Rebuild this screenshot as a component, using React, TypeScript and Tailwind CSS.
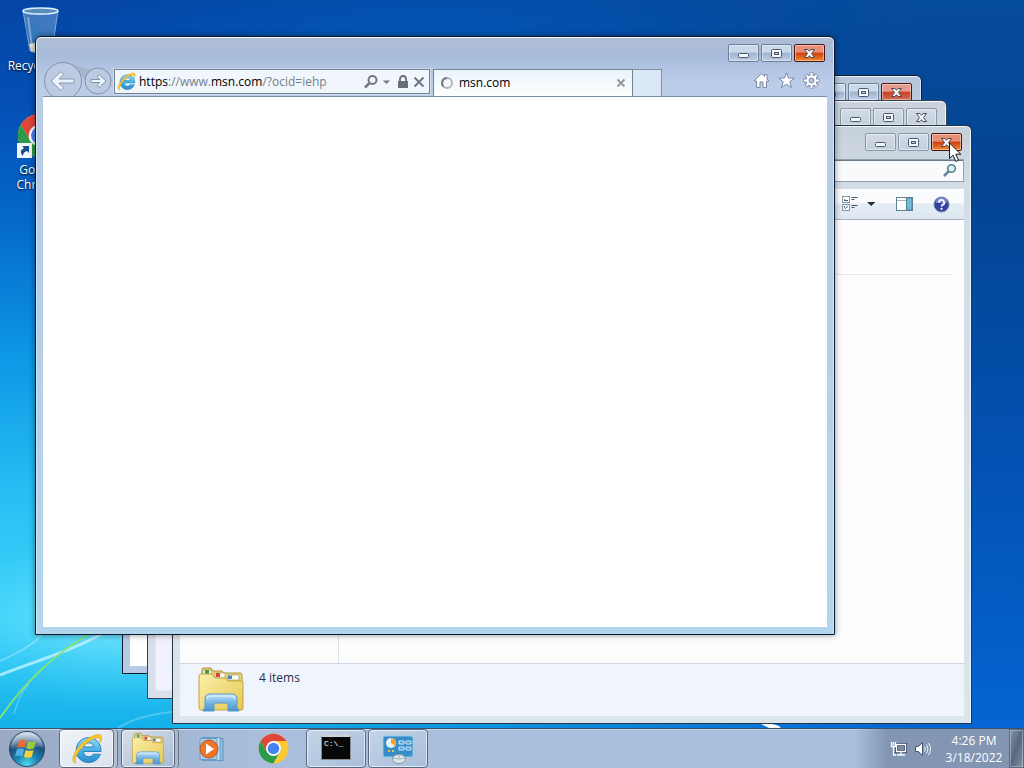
import React from "react";

function CaptionGlyph({ kind }: { kind: "min" | "max" | "close" }) {
  return (
    <svg width="15" height="13" viewBox="0 0 15 13" aria-hidden="true">
      {kind === "min" && <rect x="2.5" y="6.5" width="10" height="4" rx="1" fill="#f4f7fb" stroke="#4c586c" />}
      {kind === "max" && (
        <>
          <rect x="2.5" y="2.5" width="10" height="8" rx="1" fill="#f4f7fb" stroke="#4c586c" />
          <rect x="5.5" y="5.5" width="4" height="2" fill="#c4d2e6" stroke="#4c586c" />
        </>
      )}
      {kind === "close" && (
        <path
          d="M2.500 2.500h3.500l1.500 1.800L9 2.500h3.500L9.500 6.500l3 4H9L7.500 8.700 6 10.500H2.500l3-4z"
          fill="#f8f8fa" stroke="#4c4a58" strokeLinejoin="round"
        />
      )}
    </svg>
  );
}

function CaptionButtons({ tone }: { tone: "active" | "mixed" | "flat" | "hover" }) {
  const plain =
    tone === "active" || tone === "mixed"
      ? "border-[#6d7e99] bg-linear-to-b from-[#ccd9eb] from-45% via-[#9db3d0] via-50% to-[#bfd0e6]"
      : "border-[#8a97a8] bg-linear-to-b from-[#d3dce7] to-[#c4cfdd]";
  const close =
    tone === "flat"
      ? "border-[#8a97a8] bg-linear-to-b from-[#d3dce7] to-[#c4cfdd]"
      : tone === "mixed"
        ? "border-[#4b1414] bg-linear-to-b from-[#e69a8b] from-45% via-[#c93f28] via-50% to-[#d76c4e]"
        : "border-[#4b1414] bg-linear-to-b from-[#e88e74] from-45% via-[#cc3a12] via-50% to-[#f28a2c]";
  const base = "flex h-[18px] w-[31px] items-center justify-center rounded-xs border shadow-[inset_0_0_0_1px_rgba(255,255,255,0.45)]";
  return (
    <div className="flex gap-0.5">
      <button aria-label="Minimize" className={base + " " + plain}><CaptionGlyph kind="min" /></button>
      <button aria-label="Maximize" className={base + " " + plain}><CaptionGlyph kind="max" /></button>
      <button aria-label="Close" className={base + " " + close}><CaptionGlyph kind="close" /></button>
    </div>
  );
}

function IeLogo({ size }: { size: number }) {
  return (
    <svg width={size} height={size} viewBox="0 0 32 32" aria-hidden="true">
      <defs>
        <linearGradient id="ieBlue" x1="0" y1="0" x2="0" y2="1">
          <stop offset="0" stopColor="#8fdcf8" />
          <stop offset="0.55" stopColor="#3fb0e6" />
          <stop offset="1" stopColor="#2c8dcd" />
        </linearGradient>
      </defs>
      <path
        d="M30 18.5H12.5c.2 3.2 2.2 5.2 5.2 5.2 2 0 3.6-.9 4.6-2.4h7C27.600 26.500 23 29.500 17.500 29.500 10.500 29.500 5.200 24.300 5.200 17.200 5.200 10 10.500 4.700 17.500 4.700 25 4.700 30.300 10 30 18.500zM22.800 14c-.5-2.600-2.300-4.200-5-4.200s-4.600 1.600-5.100 4.200z"
        fill="url(#ieBlue)" stroke="#2579b5" strokeWidth="0.9"
      />
      <path d="M5 30C-2 29 3.500 17 12 9.500 20 2 29.500-.5 30.500 3.500c.6 2.300-.6 4.500-1.500 6 .3-2.600.1-4.400-2.200-4.600-3.400-.3-9 2.700-14.200 8C7.500 18 4.500 23.500 4.300 27c0 1.400.2 2.300.7 3z" fill="#f7c52d" stroke="#d99a1c" strokeWidth="0.5" />
    </svg>
  );
}

function ChromeLogo({ size }: { size: number }) {
  return (
    <svg width={size} height={size} viewBox="0 0 48 48" aria-hidden="true">
      <circle cx="24" cy="24" r="23" fill="#fbc934" />
      <path d="M4.100 12.500A23 23 0 0 1 43.900 12.500H24L14 29.500z" fill="#e0463a" />
      <path d="M4.100 12.500L14 29.700 24 35 33.900 29.700 24 47A23 23 0 0 1 4.100 12.500z" fill="#2b9c4c" />
      <path d="M43.900 12.500H24L34 29.700 24 47A23 23 0 0 0 43.900 12.500z" fill="#fbc934" />
      <circle cx="24" cy="24" r="11.500" fill="#fff" />
      <circle cx="24" cy="24" r="9" fill="#4584ef" />
    </svg>
  );
}

function FolderIcon({ size }: { size: number }) {
  return (
    <svg width={size} height={size} viewBox="0 0 48 48" aria-hidden="true">
      <defs>
        <linearGradient id="folderBody" x1="0" y1="0" x2="1" y2="1">
          <stop offset="0" stopColor="#fbf1ac" />
          <stop offset="1" stopColor="#e6c751" />
        </linearGradient>
        <linearGradient id="folderBase" x1="0" y1="0" x2="0" y2="1">
          <stop offset="0" stopColor="#c8e5f8" />
          <stop offset="0.5" stopColor="#76b6e6" />
          <stop offset="1" stopColor="#4992cc" />
        </linearGradient>
      </defs>
      <path d="M5 3q0-1 1-1h8l2 3h9l2 2h16q2 0 2 2v33H5z" fill="#e9d272" stroke="#b3943c" />
      <path d="M6 4h8v6H6zM18 7h10v5H18zM31 9h11v5H31z" fill="#fffef3" stroke="#a69b6a" strokeWidth=".7" />
      <path d="M8 4h4v4H8z" fill="#3da24c" />
      <path d="M19 7h4v4h-4z" fill="#d6463b" />
      <path d="M31 9.500h4v3.500h-4z" fill="#4a84c2" />
      <path d="M2 10q0-2 2-2h11l3 4h11l2 3h14q1 0 1 2v25q0 2-2 2H4q-2 0-2-2z" fill="url(#folderBody)" stroke="#c3a33f" />
      <path d="M8 33q0-5 5-5h22q5 0 5 5v9q2 1 2 3H31v-7q0-1-1-1H18q-1 0-1 1v7H6q0-2 2-3z" fill="url(#folderBase)" stroke="#5b9acb" />
      <path d="M10 33q0-3 3-3h22q3 0 3 3" fill="none" stroke="#e6f5fd" />
    </svg>
  );
}

function StartOrb() {
  return (
    <svg width="38" height="38" viewBox="0 0 38 38" aria-hidden="true">
      <defs>
        <radialGradient id="orb" cx="0.5" cy="0.95" r="0.9">
          <stop offset="0" stopColor="#55dcf2" />
          <stop offset="0.35" stopColor="#1c86b3" />
          <stop offset="0.7" stopColor="#1c4d7c" />
          <stop offset="1" stopColor="#8da9c4" />
        </radialGradient>
        <linearGradient id="orbGloss" x1="0" y1="0" x2="0" y2="1">
          <stop offset="0" stopColor="#fff" stopOpacity="0.65" />
          <stop offset="1" stopColor="#fff" stopOpacity="0.08" />
        </linearGradient>
      </defs>
      <circle cx="19" cy="19" r="17.500" fill="url(#orb)" stroke="#2b4869" />
      <path d="M3 18a16 16 0 0 1 32 0C28 14 12 22 3 18z" fill="url(#orbGloss)" />
      <path d="M11 11c3-2 5-1.500 7.500-.4L16.700 17.600c-2.400-1-4.500-1.200-7.400.3z" fill="#ee6a35" />
      <path d="M20 11.300c2.600 1.100 4.700 1.300 8-.3l-1.900 7.200c-2.900 1.400-5 1.200-7.900.1z" fill="#9cc93c" />
      <path d="M8.800 19.500c2.900-1.500 5-1.200 7.400-.2l-1.900 7c-2.300-1.100-4.500-1.100-7.300.3z" fill="#53aee6" />
      <path d="M17.700 20c2.700 1.100 5 1.200 7.900-.1l-1.900 7c-2.800 1.300-5.200 1.100-7.800-.1z" fill="#fbd13a" />
    </svg>
  );
}

function Wallpaper() {
  return (
    <svg className="absolute inset-0 h-full w-full" viewBox="0 0 1024 728" preserveAspectRatio="none" aria-hidden="true">
      <defs>
        <linearGradient id="sky" x1="0" y1="0" x2="0" y2="1">
          <stop offset="0" stopColor="#0546a4" />
          <stop offset="0.15" stopColor="#0450b6" />
          <stop offset="0.3" stopColor="#0468cb" />
          <stop offset="0.5" stopColor="#0d9ae6" />
          <stop offset="0.7" stopColor="#2cc2f5" />
          <stop offset="0.85" stopColor="#3cd2f8" />
          <stop offset="1" stopColor="#14b0ea" />
        </linearGradient>
        <linearGradient id="skyRight" x1="0" y1="0" x2="0" y2="1">
          <stop offset="0" stopColor="#064c9c" />
          <stop offset="0.25" stopColor="#034491" />
          <stop offset="0.65" stopColor="#0352b4" />
          <stop offset="1" stopColor="#0565d2" />
        </linearGradient>
        <linearGradient id="fade" x1="0" y1="0" x2="1" y2="0">
          <stop offset="0.2" stopColor="#000" />
          <stop offset="0.9" stopColor="#fff" />
        </linearGradient>
        <mask id="fadeMask"><rect width="1024" height="728" fill="url(#fade)" /></mask>
        <radialGradient id="glow">
          <stop offset="0" stopColor="#a5f4ff" stopOpacity="0.6" />
          <stop offset="1" stopColor="#50dcff" stopOpacity="0" />
        </radialGradient>
        <radialGradient id="topGlow">
          <stop offset="0" stopColor="#0257b8" stopOpacity="0.8" />
          <stop offset="1" stopColor="#0257b8" stopOpacity="0" />
        </radialGradient>
      </defs>
      <rect width="1024" height="728" fill="url(#sky)" />
      <rect width="1024" height="728" fill="url(#skyRight)" mask="url(#fadeMask)" />
      <ellipse cx="420" cy="40" rx="380" ry="90" fill="url(#topGlow)" />
      <ellipse cx="120" cy="620" rx="190" ry="90" fill="url(#glow)" />
      <path d="M0 675C35 661 70 652 105 632" stroke="#c8f6ff" strokeWidth="3" fill="none" opacity=".75" />
      <path d="M0 661C25 650 38 640 43 633" stroke="#c8f6ff" strokeWidth="2" fill="none" opacity=".4" />
      <path d="M0 718C25 682 53 655 92 632" stroke="#82e573" strokeWidth="2" fill="none" />
      <path d="M14 714C20 693 24 690 29 684" stroke="#b9f1fb" strokeWidth="1.500" fill="none" opacity=".35" />
      <path d="M118 728C133 718 152 714 172 712" stroke="#b9f1fb" strokeWidth="2" fill="none" opacity=".3" />
      <path d="M761 724q16-1 20 4h-12z" fill="#fff" />
    </svg>
  );
}

const frame = "absolute flex flex-col rounded-t-md border";

function BrowserWindow() {
  return (
    <section
      aria-label="msn.com"
      className={frame + " left-[35px] top-9 h-[599px] w-[800px] overflow-hidden border-[#0b1a2c] bg-[linear-gradient(180deg,#b0bdd4_0px,#a8bcdb_20px,#bccdea_46px,#b9cbe6_90px,#b6cce8_130px,#b2d5ee_600px)] px-[7px] pb-[7px] shadow-[inset_0_1px_0_#f4f8fc,inset_1px_0_0_#d5e6f5,inset_-1px_0_0_#c9ecfb,0_0_6px_rgba(0,0,0,0.45)]"}
    >
      <div className="flex h-[26px] shrink-0 justify-end pr-0.5 pt-[7px]">
        <CaptionButtons tone="active" />
      </div>
      <div className="flex h-[34px] shrink-0 items-end border-b border-[#788ca6]">
        <div className="flex h-9 w-[71px] shrink-0 items-start overflow-hidden">
          <svg width="71" height="36" viewBox="0 0 71 36" aria-hidden="true" className="shrink-0">
            <path d="M30 4Q42 10 53 9L42 20z" fill="#a5b5ce" />
            <circle cx="20" cy="21" r="18.500" fill="#bccbe1" stroke="#8392ac" />
            <circle cx="55" cy="21" r="13" fill="#bccbe1" stroke="#8392ac" />
            <path d="M8 21l10-9.500 2.500 2.800-4.600 4.700H31v4H15.900l4.600 4.700L18 30.500z" fill="#edf3fb" stroke="#8595b0" strokeLinejoin="round" />
            <path d="M63 21l-7-6.500-2 2.300 3 2.700H48v3h9l-3 2.700 2 2.300z" fill="#edf3fb" stroke="#8595b0" strokeLinejoin="round" />
          </svg>
        </div>
        <form className="relative mb-0.5 flex h-[25px] w-[316px] min-w-0 items-center gap-1 border border-[#70858f] bg-[#f0f6fb] px-0.5 outline outline-white/30" onSubmit={(e) => e.preventDefault()}>
          <IeLogo size={19} />
          <input aria-label="Address" defaultValue="https://www.msn.com/?ocid=iehp" className="h-5 w-[219px] shrink-0 bg-transparent text-xs text-transparent caret-black outline-none" />
          <div aria-hidden="true" className="pointer-events-none absolute left-6 text-xs text-[#76808b]">
            <span className="text-black">https</span>://www.<span className="text-black">msn.com</span>/?ocid=iehp
          </div>
          <button aria-label="Search" className="flex">
            <svg width="16" height="16" viewBox="0 0 16 16" fill="none" stroke="#717783" strokeWidth="2"><circle cx="9.500" cy="6" r="4" /><path d="M6.500 9L2 13.500" strokeWidth="2.500" /></svg>
          </button>
          <button aria-label="Show address list" className="flex">
            <svg width="8" height="8" viewBox="0 0 8 8"><path d="M0 2.500h7L3.500 6z" fill="#717783" /></svg>
          </button>
          <button aria-label="Security report" className="ml-0.5 flex">
            <svg width="12" height="14" viewBox="0 0 12 14"><path d="M3 6V4a3 3 0 0 1 6 0v2" fill="none" stroke="#686e7a" strokeWidth="1.800" /><rect x="1" y="6" width="10" height="7" fill="#686e7a" /></svg>
          </button>
          <button aria-label="Stop" className="flex">
            <svg width="12" height="12" viewBox="0 0 12 12"><path d="M1.500 1.500l9 9M10.500 1.500l-9 9" stroke="#717783" strokeWidth="2" /></svg>
          </button>
        </form>
        <div className="ml-[3px] flex h-[27px] w-[200px] shrink-0 items-center border border-b-0 border-[#71868f] bg-linear-to-b from-[#eaf4fb] to-[#fdfefe] px-1.5">
          <svg width="14" height="14" viewBox="0 0 14 14" className="shrink-0" aria-hidden="true"><circle cx="7" cy="7" r="5" fill="none" stroke="#b1b3b7" strokeWidth="2" /><path d="M3.500 10.500A5 5 0 0 1 7 2" fill="none" stroke="#7c8086" strokeWidth="2" /></svg>
          <span className="ml-[5px] flex-1 text-xs text-black">msn.com</span>
          <button aria-label="Close tab" className="flex"><svg width="10" height="10" viewBox="0 0 10 10"><path d="M1.500 1.500l7 7M8.500 1.500l-7 7" stroke="#92989f" strokeWidth="2" /></svg></button>
        </div>
        <button aria-label="New tab" className="h-[27px] w-[29px] shrink-0 border border-b-0 border-l-0 border-[#7e929f] bg-[#dae7f6]" />
        <div className="mb-[7px] ml-auto flex items-center gap-2 pr-[7px]">
          <button aria-label="Home" className="flex"><svg width="17" height="17" viewBox="0 0 17 17"><path d="M8.500 1.500L1 9h2.500v6.500h3.500V10h3v5.500h3.500V9H16l-2-2V2.500h-2.500v2z" fill="#fff" stroke="#7888a5" /></svg></button>
          <button aria-label="Favorites" className="flex"><svg width="17" height="17" viewBox="0 0 17 17"><path d="M8.500.8l2 5.300h5.800l-4.500 3.700 1.700 5.800-5-3.400-5 3.400 1.700-5.800L.7 6.100h5.800z" fill="#fff" stroke="#7888a5" /></svg></button>
          <button aria-label="Tools" className="flex">
            <svg width="17" height="17" viewBox="0 0 17 17" fill="none">
              <g stroke="#7888a5" strokeWidth="4"><path d="M8.500.5v16M.5 8.500h16M2.900 2.900l11.200 11.200M14.100 2.900L2.900 14.100" /></g>
              <circle cx="8.500" cy="8.500" r="5.800" fill="#7888a5" />
              <g stroke="#fff" strokeWidth="2"><path d="M8.500 1v15M1 8.500h15M3.300 3.300l10.400 10.400M13.700 3.300L3.300 13.700" /></g>
              <circle cx="8.500" cy="8.500" r="5" fill="#fff" /><circle cx="8.500" cy="8.500" r="2.500" fill="#b7c6df" stroke="#7888a5" />
            </svg>
          </button>
        </div>
      </div>
      <main className="flex-1 bg-white" />
    </section>
  );
}

function ExplorerWindow() {
  return (
    <section aria-label="Explorer" className={frame + " left-[172px] top-[125px] h-[599px] w-[800px] border-[#243442] bg-linear-to-b from-[#c6d0db] from-0% via-[#d3dce7] via-10% to-[#dbe5ec] px-[7px] pb-[7px] shadow-[inset_0_1px_0_#f4f8fc,inset_-1px_0_0_#eef5fb]"}>
      <div className="flex h-[33px] shrink-0 justify-end pr-0.5 pt-[7px]"><CaptionButtons tone="hover" /></div>
      <div className="flex h-[30px] shrink-0 justify-end">
        <label className="flex h-[23px] w-[220px] items-center border border-[#8fa0af] bg-[#f8fafc] pr-1.5 shadow-[inset_0_1px_0_#697b89]">
          <input type="search" aria-label="Search files" className="min-w-0 flex-1 bg-transparent outline-none" />
          <svg width="15" height="15" viewBox="0 0 15 15" fill="none" aria-hidden="true"><path d="M7 8L2 13" stroke="#668494" strokeWidth="2.500" /><circle cx="9.500" cy="5.500" r="3.800" fill="#e5f2f6" stroke="#4f8490" strokeWidth="1.600" /></svg>
        </label>
      </div>
      <div className="flex h-[31px] shrink-0 items-center justify-end border-b border-[#a5b5c7] bg-linear-to-b from-[#f9fbfd] from-45% via-[#e5ecf5] via-50% to-[#dde6f0] pr-3.5 shadow-[inset_0_1px_0_#fff]">
        <button aria-label="Change view" className="flex">
          <svg width="18" height="18" viewBox="0 0 18 18" fill="none"><rect x="1.500" y="1.500" width="7" height="6" fill="#fff" stroke="#8896a4" /><rect x="1.500" y="9.500" width="7" height="6" fill="#fff" stroke="#8896a4" /><path d="M3 6V4l2 1h2v1z" fill="#48637b" /><path d="M3.500 11v1l1 2M6.500 11l-1 2" stroke="#48637b" /><path d="M10.500 2.500h6M10.500 4.500h3M10.500 10.500h6M10.500 12.500h3" stroke="#46535f" /></svg>
        </button>
        <button aria-label="More views" className="ml-2 flex"><svg width="9" height="8" viewBox="0 0 9 8"><path d="M0 2h8.500L4.200 6z" fill="#26323e" /></svg></button>
        <button aria-label="Preview pane" className="ml-5 flex"><svg width="17" height="16" viewBox="0 0 17 16"><rect x=".5" y="1.500" width="16" height="13" fill="#fff" stroke="#658190" /><path d="M1 4.500h10" stroke="#a5b7c2" /><rect x="10.500" y="2" width="5.500" height="12" fill="#79b8d5" stroke="#4e859e" /></svg></button>
        <button aria-label="Help" className="ml-5 flex"><svg width="17" height="17" viewBox="0 0 17 17"><circle cx="8.500" cy="8.500" r="7.500" fill="#3240a0" stroke="#7b86aa" /><path d="M2.500 7a6 6 0 0 1 12 0z" fill="#7484d2" /><path d="M6 6.500a2.600 2.600 0 1 1 3.500 2.400Q8.500 9.300 8.500 10.500" fill="none" stroke="#fff" strokeWidth="1.800" /><circle cx="8.500" cy="12.800" r="1.100" fill="#fff" /></svg></button>
      </div>
      <div className="flex min-h-0 flex-1 bg-[#fdfdfe]">
        <aside className="w-[159px] border-r border-[#dce2ea]" />
        <div className="flex-1"><div className="mr-3 h-[55px] border-b border-[#e3e8ee]" /></div>
      </div>
      <footer className="flex h-[53px] shrink-0 items-start border-t border-[#cdd6e3] bg-[#f0f4fd] pl-[17px] pt-0.5 text-xs text-[#273049]">
        <FolderIcon size={48} />
        <span className="ml-3.5 mt-1">4 items</span>
      </footer>
    </section>
  );
}

const task = "flex h-full shrink-0 items-center justify-center rounded-sm border border-[#58677d] shadow-[inset_0_0_0_1px_rgba(255,255,255,0.65)]";

function Taskbar() {
  return (
    <nav aria-label="Taskbar" className="relative z-10 flex h-10 w-full shrink-0 border-t border-[#39536f] bg-linear-to-r from-[#9ba9c2] via-[#a8bedc] via-25% to-[#a8c1df] shadow-[inset_0_1px_0_#c7d7ea]">
      <button aria-label="Start" className="ml-2 mt-px w-[38px] shrink-0"><StartOrb /></button>
      <div className="ml-[13px] flex h-full min-w-0 flex-1">
        <div className="flex rounded-r-sm border-r border-[#66758b] bg-[#b4c1d3] pr-[3px]">
          <button aria-label="Internet Explorer" className={task + " w-[55px] bg-linear-to-br from-[#f0f4f8] to-[#d9e2ed]"}><IeLogo size={32} /></button>
        </div>
        <div className="ml-[3px] flex rounded-r-sm border-r border-[#66758b] bg-[#acb8ca] pr-[3px]">
          <button aria-label="Windows Explorer" className={task + " w-[54px] bg-linear-to-br from-[#d6dfe9] to-[#aabcd3]"}><FolderIcon size={34} /></button>
        </div>
        <button aria-label="Media Player" className="ml-[19px] mr-8 flex items-center">
          <svg width="28" height="28" viewBox="0 0 28 28"><path d="M6 3.500h19v22H6z" fill="#8fc2e7" stroke="#5d91bd" /><path d="M4 2.500h18v23H4z" fill="#cae3f5" stroke="#639bc4" /><path d="M2 3.500h17v21H2z" fill="#aacbe8" stroke="#6b9dc4" /><circle cx="11" cy="14" r="9" fill="#ee762b" stroke="#bd5519" /><path d="M8 8.500l8 5.500-8 5.500z" fill="#fff" /></svg>
        </button>
        <button aria-label="Chrome" className="mr-[17px] flex items-center"><ChromeLogo size={31} /></button>
        <button aria-label="Command Prompt" className={task + " w-[60px] bg-linear-to-br from-[#c6d5e7] to-[#a7bdda]"}>
          <span className="mb-[3px] block h-[25px] w-[30px] border border-t-2 border-[#868b91] border-t-[#d1d4d7] bg-[#080808] pl-0.5 pt-0.5 text-left font-['Liberation_Mono',monospace] text-[8px] leading-[10px] text-white">C:\_</span>
        </button>
        <button aria-label="Control Panel" className={task + " ml-0.5 w-[60px] bg-linear-to-br from-[#c6d5e7] to-[#a7bdda]"}>
          <svg width="34" height="30" viewBox="0 0 34 30"><rect x="2" y="2" width="30" height="21" rx="2" fill="#378dc8" stroke="#94cbea" /><circle cx="10" cy="9" r="5" fill="#e8f3fb" /><path d="M10 9V4a5 5 0 0 1 4 8z" fill="#f3a32c" /><path d="M18 7h5v3h-5zM25 7h5v3h-5zM18 13h5v3h-5zM25 13h5v3h-5z" fill="#4b9fd5" stroke="#d0e9fa" /><path d="M7 17h2M11 17h2" stroke="#f5be36" strokeWidth="2" /><ellipse cx="18" cy="25" rx="6.500" ry="4.500" fill="#dee5eb" stroke="#8998a6" /><path d="M18 20.500v3.500M12 24q6 2 12 0" fill="none" stroke="#a5b3c0" /></svg>
        </button>
      </div>
      <div className="flex h-full w-[170px] shrink-0 items-center bg-linear-to-r from-[#8b9db9]/0 to-[#8295b2] to-20%">
        <button aria-label="Network" className="ml-9 flex"><svg width="18" height="18" viewBox="0 0 18 18" fill="none"><path d="M6.500 4.500h9v7h-9z" fill="#7a8ba6" stroke="#34435b" strokeWidth="3" /><path d="M6.500 4.500h9v7h-9zM11 12v3M7 15h8M3.500 7v8H6M1.500 2v4.500h4V2M3.500 2v3" stroke="#fff" strokeWidth="1.300" /></svg></button>
        <button aria-label="Volume" className="ml-1.5 flex"><svg width="18" height="18" viewBox="0 0 18 18" fill="none"><path d="M1.500 6.500h3l4-4v13l-4-4h-3z" fill="#fff" stroke="#46556e" /><path d="M10.500 6.500q1.500 2.500 0 5M12.500 4.500q3 4.500 0 9M14.500 3q4 6 0 12" stroke="#edf3fa" /></svg></button>
        <time dateTime="2022-03-18T16:26" className="ml-[9px] flex w-[66px] flex-col text-center text-xs leading-[17px] text-white"><span>4:26 PM</span><span>3/18/2022</span></time>
        <button aria-label="Show desktop" className="ml-auto h-full w-[15px] border border-[#596b80] bg-linear-to-br from-[#8495a9] via-[#56687d] to-[#8292a5] shadow-[inset_0_0_0_1px_rgba(255,255,255,0.3)]" />
      </div>
    </nav>
  );
}

export default function App() {
  return (
    <div className="flex min-h-screen flex-col overflow-hidden font-['Open_Sans','Noto_Sans',sans-serif]">
      <div className="relative flex-1 overflow-hidden">
        <Wallpaper />
        <a href="#recycle" className="absolute left-0 top-1 flex w-[78px] flex-col items-center text-xs text-white [text-shadow:0_1px_2px_#000]">
          <svg width="44" height="52" viewBox="0 0 44 52" aria-hidden="true">
            <path d="M6 7h35l-6 40q-11 5-22 0z" fill="#9cc4e7" fillOpacity=".4" stroke="#b7d5ec" strokeOpacity=".6" />
            <path d="M8 22q10-8 16 2t14-4l-4 25q-11 5-20 0z" fill="#3479bd" opacity=".65" />
            <path d="M12 40l10-2 8 3 4-2-1 8q-10 3-19 0z" fill="#dedfd2" />
            <ellipse cx="23.500" cy="7" rx="17.500" ry="3" fill="#568cbc" stroke="#e1eff8" strokeWidth="1.500" />
            <path d="M11 13l4 30" stroke="#fff" strokeWidth="2" opacity=".35" />
          </svg>
          <span className="mt-0.5">Recycle Bin</span>
        </a>
        <a href="#chrome" className="absolute left-0 top-[113px] flex w-[78px] flex-col items-center text-center text-xs leading-[15px] text-white [text-shadow:0_1px_2px_#000]">
          <span className="relative"><ChromeLogo size={45} />
            <svg className="absolute bottom-0 left-0" width="15" height="15" viewBox="0 0 15 15" aria-hidden="true"><path d="M0 0h15v15H0z" fill="#f4f8fc" /><path d="M5 3h7v7l-2-2q-4 1-4 5-5-5 1-8z" fill="#194e91" /></svg>
          </span>
          <span className="mt-1">Google<br />Chrome</span>
        </a>
        <section aria-label="Browser, background" className={frame + " left-[122px] top-[75px] h-[599px] w-[800px] border-[#0e1c2c] bg-linear-to-b from-[#b6c6da] via-[#bdcee5] via-10% to-[#b7cbe6] px-[7px] pb-[7px] shadow-[inset_0_1px_0_#e9f2f9,inset_-1px_0_0_#d8e8f5]"}>
          <div className="flex h-[60px] shrink-0 justify-end pr-0.5 pt-[7px]"><CaptionButtons tone="mixed" /></div>
          <div className="flex-1 bg-white" />
        </section>
        <section aria-label="Dialog, background" className={frame + " left-[147px] top-[100px] h-[599px] w-[800px] border-[#344454] bg-linear-to-b from-[#cad3de] to-[#d8e1eb] px-[7px] pb-[7px] shadow-[inset_0_1px_0_#f4f8fc,inset_-1px_0_0_#eef5fb]"}>
          <div className="flex h-[33px] shrink-0 justify-end pr-0.5 pt-[7px]"><CaptionButtons tone="flat" /></div>
          <div className="flex-1 border border-[#e4e9f2] bg-[#f0f2fb]" />
        </section>
        <ExplorerWindow />
        <BrowserWindow />
        <svg className="pointer-events-none absolute left-[948px] top-[142px]" width="15" height="22" viewBox="0 0 15 22" aria-hidden="true"><path d="M1.500 1v15.500L5 13.200l2.800 6.300 2.700-1.200L7.800 12.200h5z" fill="#fff" stroke="#151515" strokeLinejoin="round" /></svg>
      </div>
      <Taskbar />
    </div>
  );
}
